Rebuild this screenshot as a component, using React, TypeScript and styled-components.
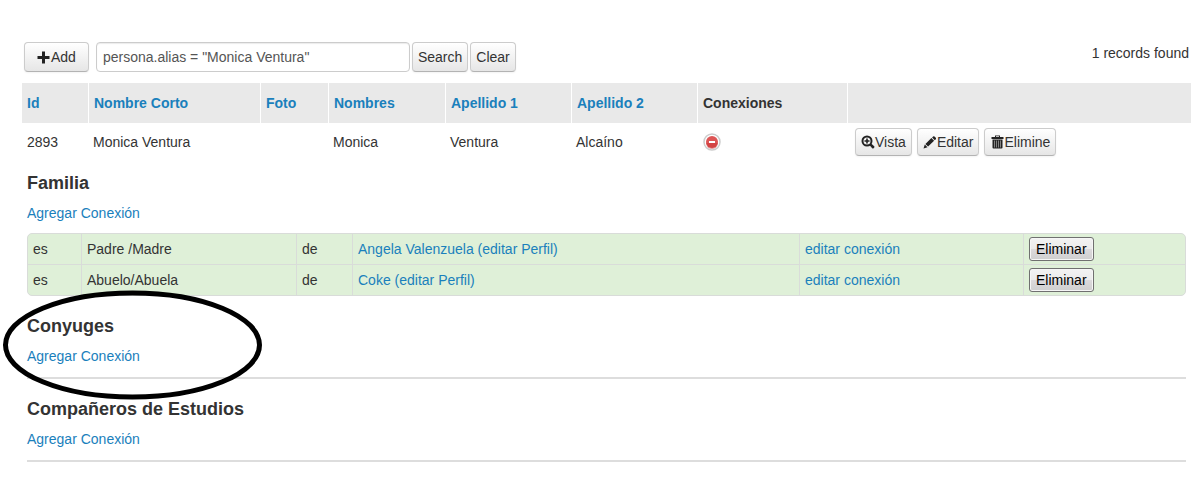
import React from "react";
import styled, { createGlobalStyle } from "styled-components";

const GlobalStyle = createGlobalStyle`
  *, *::before, *::after { box-sizing: border-box; }
  body {
    margin: 0;
    background: #fff;
    color: #333;
    font: 14px/20px "Liberation Sans", Arial, sans-serif;
  }
  button, input { font: inherit; margin: 0; }
`;

const Page = styled.main`
  padding: 40px 1px 20px 22px;
`;

const Toolbar = styled.form`
  display: flex;
  align-items: center;
  gap: 2px;
  height: 33px;
  padding-left: 2px;
  margin-bottom: 10px;
`;

const Button = styled.button<{ $size?: "large" | "small" }>`
  display: inline-flex;
  align-items: center;
  justify-content: center;
  height: ${(p) => (p.$size === "small" ? 28 : 30)}px;
  padding: 0 ${(p) => (p.$size === "large" ? 12 : 5)}px;
  border: 1px solid #ccc;
  border-bottom-color: #b3b3b3;
  border-radius: 4px;
  background: linear-gradient(#fff, #e6e6e6);
  box-shadow: 0 1px 2px rgba(0, 0, 0, 0.05);
  color: #333;
  white-space: nowrap;
  cursor: pointer;
`;

const SearchInput = styled.input`
  flex: 0 1 314px;
  min-width: 0;
  height: 30px;
  margin-left: 5px;
  padding: 4px 6px;
  border: 1px solid #ccc;
  border-radius: 4px;
  box-shadow: inset 0 1px 1px rgba(0, 0, 0, 0.08);
  background: #fff;
  color: #555;
`;

const Count = styled.span`
  align-self: flex-start;
  margin-left: auto;
  padding: 3px 2px 0 0;
  white-space: nowrap;
`;

const Records = styled.table`
  width: 100%;
  table-layout: fixed;
  border-collapse: separate;
  border-spacing: 0;
`;

const HeadCell = styled.th<{ $width?: number }>`
  width: ${(p) => (p.$width ? `${p.$width}px` : "auto")};
  height: 40px;
  padding: 0 5px;
  background: #e9e9e9;
  text-align: left;
  font-weight: bold;
  white-space: nowrap;

  & + & { border-left: 1px solid #fff; }
`;

const Cell = styled.td`
  height: 38px;
  padding: 0 5px;
  white-space: nowrap;
`;

const Link = styled.a`
  color: #1a80bc;
  text-decoration: none;
`;

const Actions = styled.div`
  display: flex;
  gap: 5px;
  padding-left: 3px;
`;

const Toggle = styled.button`
  display: block;
  padding: 0;
  border: 0;
  background: none;
  cursor: pointer;

  svg { display: block; }
`;

const Details = styled.div`
  display: flex;
  flex-direction: column;
  gap: 20px;
  padding: 12px 5px 0;
`;

const Section = styled.section`
  position: relative;
`;

const Heading = styled.h4`
  margin: 0 0 10px;
  font-size: 18px;
  line-height: 20px;
`;

const AddLink = styled(Link)`
  display: block;
  width: max-content;
`;

const Rule = styled.hr`
  height: 2px;
  margin: 11px 0 0;
  border: 0;
  background: #ddd;
`;

const Connections = styled.table`
  width: 100%;
  margin-top: 10px;
  table-layout: fixed;
  border-collapse: separate;
  border-spacing: 0;
  overflow: hidden;
  border: 1px solid #d9dcd9;
  border-radius: 5px;
  background: #dff0d8;

  tr + tr td { border-top: 1px solid #d9dcd9; }
`;

const ConnectionCell = styled.td<{ $width?: number }>`
  width: ${(p) => (p.$width ? `${p.$width}px` : "auto")};
  height: 30px;
  padding: 3px 5px;
  white-space: nowrap;

  & + & { border-left: 1px solid #d9dcd9; }
`;

const DeleteButton = styled.button`
  display: block;
  height: 24px;
  padding: 0 6px;
  border: 1px solid #707070;
  border-radius: 3px;
  background: linear-gradient(#f3f3f3, #ebebeb 50%, #dcdadc 50%, #cfcfcf);
  box-shadow: inset 0 0 0 1px #f6f6f6;
  color: #000;
  line-height: 20px;
  cursor: pointer;
`;

const Highlight = styled.svg`
  position: absolute;
  top: -28px;
  left: -26px;
  pointer-events: none;
`;

const Icon = ({ children }: { children: React.ReactNode }) => (
  <svg width="14" height="14" viewBox="0 0 14 14" fill="#222" aria-hidden="true">
    {children}
  </svg>
);

const PlusIcon = () => (
  <Icon>
    <path d="M5 1.500h3V6h4.500v3H8v4.500H5V9H.5V6H5z" />
  </Icon>
);

const ZoomIcon = () => (
  <Icon>
    <circle cx="6" cy="6" r="4.500" fill="none" stroke="#222" strokeWidth="2" />
    <path d="M5.200 3.500h1.600v1.700h1.700v1.600H6.800v1.700H5.200V6.800H3.500V5.200h1.700z" />
    <path d="M8.600 10.200 10.200 8.600l3 2.600q.7.700 0 1.400l-.6.600q-.7.700-1.400 0z" />
  </Icon>
);

const PencilIcon = () => (
  <Icon>
    <path d="M.5 13.500l1.300-4 2.700 2.700zM2.400 8.900l6-5.800 2.700 2.700-6 5.800zM9.100 2.500l1-1q.7-.6 1.400 0l1.300 1.300q.6.700 0 1.400l-1 1z" />
  </Icon>
);

const TrashIcon = () => (
  <Icon>
    <path d="M5 .5h5V2h3.500v2h-12V2H5zM6 1.300V2h3v-.7z" fillRule="evenodd" />
    <path d="M2.500 4.500h10v8q0 1-1 1h-8q-1 0-1-1z" />
    <path d="M4.500 5.500v7M6.500 5.500v7M8.500 5.500v7M10.500 5.500v7" stroke="#999" strokeWidth=".8" />
  </Icon>
);

const MinusIcon = () => (
  <svg width="20" height="18" viewBox="0 0 20 18" aria-hidden="true">
    <circle cx="10" cy="9" r="8" fill="#fff" stroke="#ccc" strokeWidth="1.500" />
    <circle cx="10" cy="9" r="6" fill="#dd5555" />
    <path d="M4 10a6 6 0 0 0 12 0z" fill="#c93434" opacity=".5" />
    <rect x="7" y="8" width="6" height="2" fill="#fff" />
  </svg>
);

const columns = [
  { label: "Id", width: 66 },
  { label: "Nombre Corto", width: 172 },
  { label: "Foto", width: 68 },
  { label: "Nombres", width: 117 },
  { label: "Apellido 1", width: 126 },
  { label: "Apellido 2", width: 126 },
];

const connections = [
  { relation: "Padre /Madre", person: "Angela Valenzuela" },
  { relation: "Abuelo/Abuela", person: "Coke" },
];

export default function App() {
  return (
    <>
      <GlobalStyle />
      <Page>
        <Toolbar onSubmit={(e) => e.preventDefault()}>
          <Button type="button" $size="large"><PlusIcon />Add</Button>
          <SearchInput type="text" aria-label="Query" defaultValue={'persona.alias = "Monica Ventura"'} />
          <Button type="submit">Search</Button>
          <Button type="button">Clear</Button>
          <Count>1 records found</Count>
        </Toolbar>

        <Records>
          <thead>
            <tr>
              {columns.map((c) => (
                <HeadCell key={c.label} scope="col" $width={c.width}>
                  <Link href="#">{c.label}</Link>
                </HeadCell>
              ))}
              <HeadCell scope="col" $width={150}>Conexiones</HeadCell>
              <HeadCell scope="col" aria-label="Acciones" />
            </tr>
          </thead>
          <tbody>
            <tr>
              <Cell>2893</Cell>
              <Cell>Monica Ventura</Cell>
              <Cell />
              <Cell>Monica</Cell>
              <Cell>Ventura</Cell>
              <Cell>Alcaíno</Cell>
              <Cell>
                <Toggle type="button" aria-label="Ocultar conexiones"><MinusIcon /></Toggle>
              </Cell>
              <Cell>
                <Actions>
                  <Button type="button" $size="small"><ZoomIcon />Vista</Button>
                  <Button type="button" $size="small"><PencilIcon />Editar</Button>
                  <Button type="button" $size="small"><TrashIcon />Elimine</Button>
                </Actions>
              </Cell>
            </tr>
          </tbody>
        </Records>

        <Details>
          <Section>
            <Heading>Familia</Heading>
            <AddLink href="#">Agregar Conexión</AddLink>
            <Connections>
              <tbody>
                {connections.map((c) => (
                  <tr key={c.relation}>
                    <ConnectionCell $width={53}>es</ConnectionCell>
                    <ConnectionCell $width={215}>{c.relation}</ConnectionCell>
                    <ConnectionCell $width={56}>de</ConnectionCell>
                    <ConnectionCell>
                      <Link href="#">{c.person}</Link> <Link href="#">(editar Perfil)</Link>
                    </ConnectionCell>
                    <ConnectionCell $width={224}><Link href="#">editar conexión</Link></ConnectionCell>
                    <ConnectionCell $width={162}>
                      <DeleteButton type="button">Eliminar</DeleteButton>
                    </ConnectionCell>
                  </tr>
                ))}
              </tbody>
            </Connections>
          </Section>

          <Section>
            <Heading>Conyuges</Heading>
            <AddLink href="#">Agregar Conexión</AddLink>
            <Rule />
            <Highlight width="264" height="114" viewBox="0 0 264 114" aria-hidden="true">
              <ellipse cx="131.500" cy="57" rx="127" ry="52" fill="none" stroke="#000" strokeWidth="5" />
            </Highlight>
          </Section>

          <Section>
            <Heading>Compañeros de Estudios</Heading>
            <AddLink href="#">Agregar Conexión</AddLink>
            <Rule />
          </Section>
        </Details>
      </Page>
    </>
  );
}
